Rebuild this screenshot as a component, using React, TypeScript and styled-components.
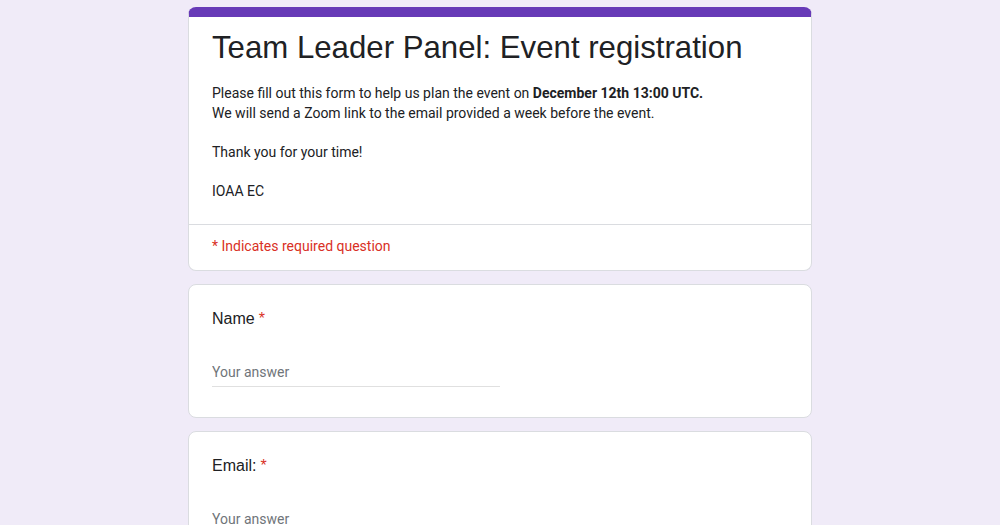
import React from "react";
import styled, { createGlobalStyle } from "styled-components";

const GlobalStyle = createGlobalStyle`
  body {
    margin: 0;
    background-color: #f0ebf8;
    font-family: Roboto, "Liberation Sans", Arial, sans-serif;
  }
`;

const Page = styled.main`
  display: flex;
  flex-direction: column;
  align-items: center;
  gap: 13px;
  padding-top: 7px;
`;

const Card = styled.section`
  width: 624px;
  box-sizing: border-box;
  background-color: #fff;
  border: 1px solid #dadce0;
  border-radius: 8px;
  overflow: hidden;
`;

const HeaderCard = styled(Card)`
  border-top: 10px solid #673ab7;
`;

const HeaderBody = styled.div`
  padding: 11px 23px 23px;
`;

const Title = styled.h1`
  margin: 0 0 16px;
  font-family: "Liberation Sans", Arial, sans-serif;
  font-weight: 400;
  font-size: 31.2px;
  line-height: 40px;
  color: #202124;
`;

const Description = styled.p`
  margin: 0;
  font-size: 14px;
  line-height: 19.5px;
  color: #202124;
  white-space: pre-line;

  b {
    font-weight: 700;
  }
`;

const RequiredNote = styled.div`
  border-top: 1px solid #dadce0;
  padding: 11px 23px 14px;
  font-size: 14px;
  line-height: 20px;
  color: #d93025;
`;

const QuestionCard = styled(Card)`
  padding: 22px 23px 30px;
`;

const Label = styled.div`
  font-family: "Liberation Sans", Arial, sans-serif;
  font-size: 16px;
  line-height: 24px;
  color: #202124;
  margin-bottom: 25px;
`;

const Star = styled.span`
  color: #d93025;
  margin-left: 4px;
`;

const AnswerInput = styled.input`
  display: block;
  width: 50%;
  box-sizing: border-box;
  border: none;
  border-bottom: 1px solid #e0e0e0;
  padding: 6px 0 4px;
  font-family: Roboto, "Liberation Sans", Arial, sans-serif;
  font-size: 14px;
  line-height: 20px;
  color: #202124;
  outline: none;
  background: transparent;

  &::placeholder {
    color: #70757a;
  }
`;

function Question({ label }: { label: string }) {
  return (
    <QuestionCard>
      <Label>
        {label}
        <Star>*</Star>
      </Label>
      <AnswerInput placeholder="Your answer" />
    </QuestionCard>
  );
}

export default function App() {
  return (
    <>
      <GlobalStyle />
      <Page>
        <HeaderCard>
          <HeaderBody>
            <Title>Team Leader Panel: Event registration</Title>
            <Description>
              Please fill out this form to help us plan the event on{" "}
              <b>December 12th 13:00 UTC.</b>
              {"\n"}We will send a Zoom link to the email provided a week before the event.
              {"\n\n"}Thank you for your time!
              {"\n\n"}IOAA EC
            </Description>
          </HeaderBody>
          <RequiredNote>* Indicates required question</RequiredNote>
        </HeaderCard>
        <Question label="Name" />
        <Question label="Email:" />
      </Page>
    </>
  );
}
